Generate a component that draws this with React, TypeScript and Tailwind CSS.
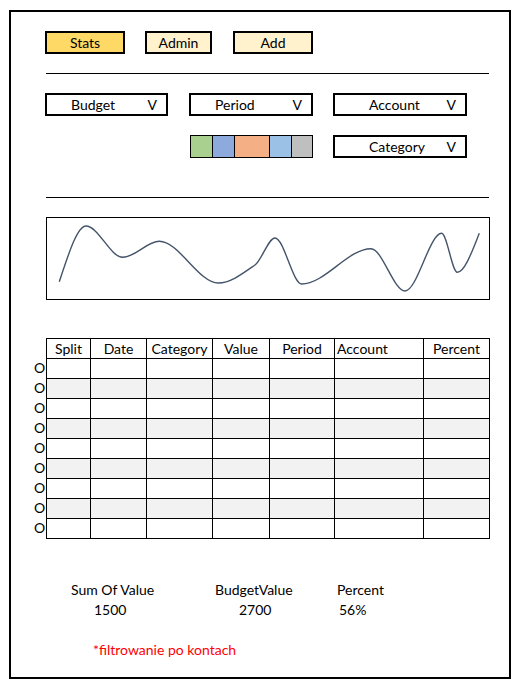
import React from "react";

type P = [number, number, number];

const pts: P[] = [
  [12.3, 63.7, -3],
  [39, 8, 0],
  [75.7, 39.3, 0],
  [112.3, 23.3, 0],
  [171.3, 65, 0],
  [208, 47, -0.7],
  [228, 20, 0],
  [254.7, 66, 0],
  [324, 30.7, 0],
  [358, 73, 0],
  [394.7, 15.3, 0],
  [410.3, 54.3, 0],
  [432.3, 15.3, -2.5],
];

function buildPath(p: P[]) {
  let d = `M${p[0][0]},${p[0][1]}`;
  for (let i = 0; i < p.length - 1; i++) {
    const [x1, y1, s1] = p[i];
    const [x2, y2, s2] = p[i + 1];
    const dx = (x2 - x1) / 3;
    d += ` C${(x1 + dx).toFixed(2)},${(y1 + s1 * dx).toFixed(2)} ${(x2 - dx).toFixed(2)},${(y2 - s2 * dx).toFixed(2)} ${x2},${y2}`;
  }
  return d;
}

function Dropdown({ label, w, pl }: { label: string; w: string; pl: string }) {
  return (
    <div className={`flex h-[23px] items-center border-2 border-black bg-white ${w}`}>
      <span className={pl}>{label}</span>
      <span className="ml-auto pr-[9px]">V</span>
    </div>
  );
}

const cols = ["Split", "Date", "Category", "Value", "Period", "Account", "Percent"];

export default function App() {
  const d = buildPath(pts);
  return (
    <div className="bg-white pl-[9px] pt-[10px] font-['Lato',sans-serif] text-[14px] leading-none text-black">
      <div className="h-[669px] w-[502px] border-2 border-black pl-[34px] pt-[19px]">
        {/* Tabs */}
        <div className="flex h-[23px]">
          <div className="flex w-[80px] items-center justify-center border-2 border-black bg-[#FFD966]">Stats</div>
          <div className="ml-[20px] flex w-[67px] items-center justify-center border-2 border-black bg-[#FFF2CC]">Admin</div>
          <div className="ml-[21px] flex w-[80px] items-center justify-center border-2 border-black bg-[#FFF2CC]">Add</div>
        </div>

        <div className="ml-px mt-[19px] h-px w-[443px] bg-black" />

        {/* Filters */}
        <div className="mt-[19px] flex">
          <Dropdown label="Budget" w="w-[123px]" pl="pl-[24px]" />
          <div className="ml-[21px]">
            <Dropdown label="Period" w="w-[124px]" pl="pl-[24px]" />
          </div>
          <div className="ml-[20px]">
            <Dropdown label="Account" w="w-[134px]" pl="pl-[34px]" />
          </div>
        </div>
        <div className="mt-[19px] flex">
          <div className="ml-[145px] flex h-[23px] w-[123px] border border-black">
            <div className="w-[22px] border-r border-black bg-[#A9D08E]" />
            <div className="w-[22px] border-r border-black bg-[#8EA9DB]" />
            <div className="w-[35px] border-r border-black bg-[#F4B084]" />
            <div className="w-[22px] border-r border-black bg-[#9BC2E6]" />
            <div className="flex-1 bg-[#BFBFBF]" />
          </div>
          <div className="ml-[20px]">
            <Dropdown label="Category" w="w-[134px]" pl="pl-[34px]" />
          </div>
        </div>

        <div className="ml-px mt-[39px] h-px w-[443px] bg-black" />

        {/* Chart */}
        <div className="ml-px mt-[19px] h-[83px] w-[444px] border border-black">
          <svg width="442" height="81" viewBox="0 0 442 81" className="block">
            <path d={d} fill="none" stroke="#44546A" strokeWidth="1.4" />
          </svg>
        </div>

        {/* Table */}
        <div className="ml-[-11px] mt-[38px] flex">
          <div className="w-[12px] pt-[20px]">
            {Array.from({ length: 9 }).map((_, i) => (
              <div key={i} className="flex h-[20px] items-center">O</div>
            ))}
          </div>
          <div className="w-[444px] border-b border-r border-black">
            <div className="grid grid-cols-[44px_56px_66px_57px_65px_89px_66px]">
              {cols.map((c) => (
                <div
                  key={c}
                  className={`flex h-[20px] items-center border-l border-t border-black ${
                    c === "Account" ? "justify-start pl-[2px]" : "justify-center"
                  }`}
                >
                  {c}
                </div>
              ))}
              {Array.from({ length: 9 }).map((_, r) =>
                cols.map((c) => (
                  <div
                    key={`${r}-${c}`}
                    className={`h-[20px] border-l border-t border-black ${r % 2 === 1 ? "bg-[#F2F2F2]" : "bg-white"}`}
                  />
                ))
              )}
            </div>
          </div>
        </div>

        {/* Summary */}
        <div className="mt-[41px] flex">
          <div className="ml-[26px] w-[144px]">
            <div className="flex h-[20px] items-center">Sum Of Value</div>
            <div className="flex h-[20px] items-center pl-[23px]">1500</div>
          </div>
          <div className="w-[122px]">
            <div className="flex h-[20px] items-center">BudgetValue</div>
            <div className="flex h-[20px] items-center pl-[24px]">2700</div>
          </div>
          <div>
            <div className="flex h-[20px] items-center">Percent</div>
            <div className="flex h-[20px] items-center pl-[2px]">56%</div>
          </div>
        </div>

        <div className="ml-[48px] mt-[20px] flex h-[20px] items-center text-[#FF0000]">*filtrowanie po kontach</div>
      </div>
    </div>
  );
}
